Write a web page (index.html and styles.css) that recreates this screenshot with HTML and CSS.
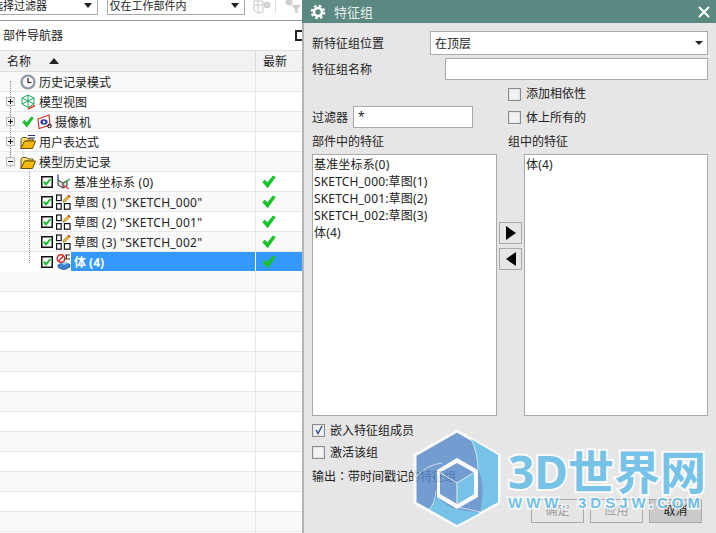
FILE: index.html
```html
<!DOCTYPE html>
<html lang="zh-CN">
<head>
  <meta charset="UTF-8" />
  <title>特征组</title>
  <link rel="stylesheet" href="styles.css">
</head>
<body>
  <svg class="defs" width="0" height="0">
    <symbol id="check" viewBox="0 0 12 12"><path d="M0.3 6.3 L2.4 4 L4.6 6.2 L9.4 0.4 L11.8 1.8 L4.9 11.4 Z" fill="#18c22c"/></symbol>
    <symbol id="tick-box" viewBox="0 0 12 12"><rect x="0.75" y="0.75" width="10.5" height="10.5" fill="#fff" stroke="#111" stroke-width="1.5"/><path d="M2 6.4 L3.4 5 L5 6.8 L8.8 2.4 L10.2 3.6 L5.1 10 Z" fill="#16c02a"/></symbol>
    <symbol id="sketch" viewBox="0 0 15 16"><g fill="#fff" stroke="#111" stroke-width="1.2"><rect x="0.6" y="1" width="4.6" height="5.6"/><rect x="0.6" y="9.6" width="4.6" height="5.6"/><rect x="8.4" y="9.6" width="5.6" height="5.6"/></g><path d="M7 8 L8 5.5 L12.6 1 L14.4 2.6 L9.6 7.2 Z" fill="#eebc3a" stroke="#8a6a10" stroke-width="0.6"/><path d="M12.6 1 L14.4 2.6 L13.6 3.4 L11.8 1.8 Z" fill="#d33"/></symbol>
    <symbol id="folder" viewBox="0 0 16 16"><path d="M1 14.5 V5 L2.5 3.5 H6.5 L8 5 H13 V7 H5 L1 14.5" fill="#fde27a" stroke="#6d5208"/><path d="M1 14.5 L4.5 7 H15.5 L12.5 14.5 Z" fill="#f4b90e" stroke="#6d5208"/></symbol>
  </svg>

  <section class="nav">
    <div class="toolbar">
      <div class="combo combo-type"><span>选择过滤器</span><i class="caret"></i></div>
      <div class="combo combo-scope"><span>仅在工作部件内</span><i class="caret"></i></div>
      <svg class="tool" width="18" height="14" viewBox="0 0 18 14"><g fill="none" stroke="#c9c9c9"><path d="M1 1 H10 V12 L5 13 L1 10 Z"/><path d="M1 5 H10 M5 1 V13"/><circle cx="14" cy="5" r="3" fill="#d8d8d8"/></g></svg>
      <i class="tool-sep"></i>
      <svg class="tool" width="18" height="14" viewBox="0 0 18 14"><circle cx="5" cy="2" r="3.5" fill="#d0d0d0"/><path d="M7 5 H17 L13.5 9 V13 H11 V9 Z" fill="#cfcfcf"/></svg>
    </div>
    <div class="nav-title">
      <span>部件导航器</span>
      <i class="maximize"></i>
    </div>
    <div class="table-head">
      <div class="cell-name"><span class="name">名称</span><i class="sort-up"></i></div>
      <div class="cell-new"><span class="name">最新</span></div>
    </div>
    <div class="tree">
      <i class="guide guide-root"></i>
      <i class="guide guide-history"></i>

      <div class="row">
        <div class="cell-name">
          <i class="exp exp-none"></i>
          <svg class="icon" width="16" height="16" viewBox="0 0 16 16"><circle cx="8" cy="8" r="7.6" fill="#8a94a4"/><circle cx="8" cy="8" r="5.4" fill="#f6f6f6"/><path d="M8 4 V8.5 H11.5" fill="none" stroke="#222" stroke-width="1.2"/></svg>
          <span class="name">历史记录模式</span>
        </div>
        <div class="cell-new"></div>
      </div>
      <div class="row">
        <div class="cell-name">
          <i class="exp exp-plus"></i>
          <svg class="icon" width="16" height="16" viewBox="0 0 16 16"><path d="M8 1 L14 4 V10 L8 13.5 L2 10 V4 Z M2 4 L14 10 M14 4 L2 10 M8 1 V13.5" fill="none" stroke="#1ca55c"/><path d="M8 15 L15 11.5" stroke="#e0452c" stroke-width="1.6"/></svg>
          <span class="name">模型视图</span>
        </div>
        <div class="cell-new"></div>
      </div>
      <div class="row">
        <div class="cell-name">
          <i class="exp exp-plus"></i>
          <svg class="check-mark" width="12" height="12"><use href="#check"/></svg>
          <svg class="icon" width="15" height="16" viewBox="0 0 15 16"><path d="M1 5 L12 1 L13 11 L2 14.5 Z" fill="#fff" stroke="#d2382a" stroke-width="1.2"/><ellipse cx="7" cy="8" rx="3.6" ry="2.8" fill="#2c3f9e"/><circle cx="7" cy="8" r="1.2" fill="#fff"/><circle cx="12.5" cy="12" r="1.8" fill="none" stroke="#111"/></svg>
          <span class="name">摄像机</span>
        </div>
        <div class="cell-new"></div>
      </div>
      <div class="row">
        <div class="cell-name">
          <i class="exp exp-plus"></i>
          <svg class="icon" width="16" height="16"><use href="#folder"/><path d="M8 1.5 H15 M8 4 H15" stroke="#2a2f80"/></svg>
          <span class="name">用户表达式</span>
        </div>
        <div class="cell-new"></div>
      </div>
      <div class="row">
        <div class="cell-name">
          <i class="exp"></i>
          <svg class="icon" width="16" height="16"><use href="#folder"/></svg>
          <span class="name">模型历史记录</span>
        </div>
        <div class="cell-new"></div>
      </div>
      <div class="row">
        <div class="cell-name level-2">
          <svg class="tick" width="12" height="12"><use href="#tick-box"/></svg>
          <svg class="icon" width="15" height="16" viewBox="0 0 15 16"><path d="M2 6 L7 9 V14 L2 11 Z M7 9 L11 7 V12 L7 14" fill="#ddd" stroke="#333"/><path d="M2 6 V0.5" stroke="#1a2fc0" stroke-width="1.2"/><path d="M7 9 L14 5" stroke="#2a9a40" stroke-width="1.2"/><path d="M7 11 L13 15" stroke="#d33" stroke-width="1.2"/></svg>
          <span class="name wide">基准坐标系 (0)</span>
        </div>
        <div class="cell-new"><svg class="late" width="14" height="14"><use href="#check"/></svg></div>
      </div>
      <div class="row">
        <div class="cell-name level-2">
          <svg class="tick" width="12" height="12"><use href="#tick-box"/></svg>
          <svg class="icon" width="15" height="16"><use href="#sketch"/></svg>
          <span class="name wide">草图 (1) "SKETCH_000"</span>
        </div>
        <div class="cell-new"><svg class="late" width="14" height="14"><use href="#check"/></svg></div>
      </div>
      <div class="row">
        <div class="cell-name level-2">
          <svg class="tick" width="12" height="12"><use href="#tick-box"/></svg>
          <svg class="icon" width="15" height="16"><use href="#sketch"/></svg>
          <span class="name wide">草图 (2) "SKETCH_001"</span>
        </div>
        <div class="cell-new"><svg class="late" width="14" height="14"><use href="#check"/></svg></div>
      </div>
      <div class="row">
        <div class="cell-name level-2">
          <svg class="tick" width="12" height="12"><use href="#tick-box"/></svg>
          <svg class="icon" width="15" height="16"><use href="#sketch"/></svg>
          <span class="name wide">草图 (3) "SKETCH_002"</span>
        </div>
        <div class="cell-new"><svg class="late" width="14" height="14"><use href="#check"/></svg></div>
      </div>
      <div class="row selected">
        <div class="cell-name level-2">
          <svg class="tick" width="12" height="12"><use href="#tick-box"/></svg>
          <svg class="icon" width="15" height="16" viewBox="0 0 15 16"><path d="M2 11 L8 8 L14 10.5 V13 L8 16 L2 13.5 Z" fill="#3d7fd0" stroke="#1d4f90" stroke-width="0.7"/><path d="M5 9 L8 7 L12 9 L8 11 Z" fill="#a8cdf2"/><circle cx="5" cy="4.5" r="3.8" fill="#fff" stroke="#d9261c" stroke-width="1.4"/><path d="M2.5 7 L7.5 2" stroke="#d9261c" stroke-width="1.4"/><path d="M9 1 H14 M9 5 H14 M10.5 1 V5" stroke="#222" stroke-width="0.9"/></svg>
          <span class="name">体 (4)</span>
        </div>
        <div class="cell-new"><svg class="late" width="14" height="14"><use href="#check"/></svg></div>
      </div>
      <div class="row"><div class="cell-name"></div><div class="cell-new"></div></div>
      <div class="row"><div class="cell-name"></div><div class="cell-new"></div></div>
      <div class="row"><div class="cell-name"></div><div class="cell-new"></div></div>
      <div class="row"><div class="cell-name"></div><div class="cell-new"></div></div>
      <div class="row"><div class="cell-name"></div><div class="cell-new"></div></div>
      <div class="row"><div class="cell-name"></div><div class="cell-new"></div></div>
      <div class="row"><div class="cell-name"></div><div class="cell-new"></div></div>
      <div class="row"><div class="cell-name"></div><div class="cell-new"></div></div>
      <div class="row"><div class="cell-name"></div><div class="cell-new"></div></div>
      <div class="row"><div class="cell-name"></div><div class="cell-new"></div></div>
      <div class="row"><div class="cell-name"></div><div class="cell-new"></div></div>
      <div class="row"><div class="cell-name"></div><div class="cell-new"></div></div>
      <div class="row"><div class="cell-name"></div><div class="cell-new"></div></div>
      <div class="row"><div class="cell-name"></div><div class="cell-new"></div></div>
    </div>
  </section>

  <section class="dialog">
    <header class="dialog-title">
      <svg width="16" height="16" viewBox="0 0 16 16"><circle cx="8" cy="8" r="4" fill="none" stroke="#fff" stroke-width="2.6"/><circle cx="8" cy="8" r="6.2" fill="none" stroke="#fff" stroke-width="2.2" stroke-dasharray="2.6 2.27"/></svg>
      <span>特征组</span>
      <svg class="close" width="12" height="12" viewBox="0 0 12 12"><path d="M1 1 L11 11 M11 1 L1 11" stroke="#fff" stroke-width="2"/></svg>
    </header>
    <div class="form">
      <div class="form-row row-position">
        <label>新特征组位置</label>
        <div class="select"><span>在顶层</span><i class="caret caret-small"></i></div>
      </div>
      <div class="form-row row-name">
        <label>特征组名称</label>
        <div class="input input-name"></div>
      </div>
      <div class="check-row row-depend"><i class="checkbox"></i><span>添加相依性</span></div>
      <div class="form-row row-filter">
        <label>过滤器</label>
        <div class="input input-filter">*</div>
        <div class="check-row"><i class="checkbox"></i><span>体上所有的</span></div>
      </div>
      <div class="list-heads">
        <span class="head-part">部件中的特征</span>
        <span>组中的特征</span>
      </div>
      <div class="lists">
        <ul class="list">
          <li>基准坐标系(0)</li>
          <li>SKETCH_000:草图(1)</li>
          <li>SKETCH_001:草图(2)</li>
          <li>SKETCH_002:草图(3)</li>
          <li>体(4)</li>
        </ul>
        <div class="movers">
          <button class="mover"><i class="arrow-right"></i></button>
          <button class="mover"><i class="arrow-left"></i></button>
        </div>
        <ul class="list">
          <li>体(4)</li>
        </ul>
      </div>
      <div class="check-row row-embed">
        <i class="checkbox checked"><svg width="10" height="10" viewBox="0 0 10 10"><path d="M2 5 L4 8.5 L8 1" fill="none" stroke="#3f4f8f" stroke-width="1.5"/></svg></i>
        <span>嵌入特征组成员</span>
      </div>
      <div class="check-row row-activate"><i class="checkbox"></i><span>激活该组</span></div>
      <p class="output">输出<span class="colon" lang="zh-TW">：</span>带时间戳记的特征组</p>
      <div class="actions">
        <button class="btn" disabled>确定</button>
        <button class="btn" disabled>应用</button>
        <button class="btn btn-cancel">取消</button>
      </div>
    </div>
  </section>

  <div class="watermark">
    <svg class="wm-logo" width="94" height="108" viewBox="0 0 94 108">
      <path d="M47 6 L89 30 V78 L47 101 L5 78 V30 Z" fill="#5a8dcc" stroke="#fff" stroke-width="3" stroke-linejoin="round"/>
      <path d="M61 14 L88 30 V77 L70 87 Q76 60 68 44 Q66 26 61 14 Z" fill="#5fbce8"/>
      <path d="M27 72 Q40 84 47 84 L70 88 L47 100 L19 84 Q24 78 27 72 Z" fill="#5fbce8"/>
      <path d="M6 52 Q16 40 32 38 M61 14 Q68 28 68 44 M70 87 Q58 84 47 82 M19 85 Q25 78 26 66" fill="none" stroke="#e4eef6" stroke-width="0.8"/>
      <path d="M47 33 L68 45 V72 L47 84 L27 72 V45 Z" fill="#fff"/>
      <path d="M47 38 L64 47.5 V69 L47 79 L30 69 V47.5 Z" fill="#5a8dcc"/>
      <path d="M47 58 L64 47.5 V69 L47 79 Z" fill="#5fbce8"/>
      <path d="M30 47.5 L47 58 L64 47.5 M47 58 V79" fill="none" stroke="#e8f0f6"/>
    </svg>
    <div class="wm-text">
      <div class="wm-name">3D世界网</div>
      <div class="wm-url">WWW. 3DSJW.COM</div>
    </div>
  </div>
</body>
</html>
```

FILE: styles.css
```css
:root {
  --panel: #e6e6e6;
  --teal: #5b8880;
  --line: #a9a9a9;
  --row-line: #e8e8e8;
  --select: #3399ff;
  --text: #222;
}

* {
  box-sizing: border-box;
}

html, body {
  height: 100%;
}

body {
  margin: 0;
  display: flex;
  overflow: hidden;
  position: relative;
  background: #fff;
  color: var(--text);
  font-family: "Noto Sans", "Noto Sans CJK SC", sans-serif;
  font-size: 12px;
  line-height: 16px;
}

.defs {
  position: absolute;
}

i {
  display: block;
  flex: none;
}

/* labels sit a pixel lower in their rows */
.name,
label,
.select span,
.check-row span {
  padding-top: 2px;
}

/* left side: part navigator */

.nav {
  width: 302px;
  flex: none;
}

.toolbar {
  display: flex;
  align-items: flex-start;
  height: 25px;
  margin-top: -4px;
  border-bottom: 1px solid #8d9a9c;
}

.combo {
  display: flex;
  align-items: center;
  justify-content: space-between;
  height: 19px;
  padding: 0 5px 0 4px;
  background: #fff;
  border: 1px solid var(--line);
  font-size: 11px;
}

.combo-type {
  width: 111px;
  margin-left: -13px;
}

.combo-scope {
  width: 139px;
  margin-left: 9px;
  padding-left: 2px;
}

.caret {
  width: 0;
  height: 0;
  border-left: 4px solid transparent;
  border-right: 4px solid transparent;
  border-top: 5px solid #222;
}

.caret-small {
  border-left-width: 4px;
  border-right-width: 4px;
  border-top-width: 4px;
}

.tool {
  margin: 4px 0 0 8px;
  flex: none;
}

.tool-sep {
  width: 1px;
  height: 17px;
  margin-left: 4px;
  background: #ddd;
}

.nav-title {
  display: flex;
  align-items: center;
  justify-content: space-between;
  height: 30px;
  padding: 0 0 0 3px;
  border-bottom: 1px solid #ddd;
}

.maximize {
  width: 7px;
  height: 11px;
  border: 2px solid #222;
  border-right: none;
}

.table-head {
  display: flex;
  height: 21px;
  background: #f2f2f2;
  border-bottom: 1px solid #ddd;
}

.table-head .cell-name {
  padding-left: 7px;
  gap: 18px;
  border-right: 1px solid #d8d8d8;
}

.table-head .cell-new {
  display: flex;
  align-items: center;
  padding-left: 7px;
}

.sort-up {
  width: 0;
  height: 0;
  border-left: 5px solid transparent;
  border-right: 5px solid transparent;
  border-bottom: 6px solid #222;
}

.tree {
  position: relative;
}

.guide {
  position: absolute;
  width: 1px;
  border-left: 1px dotted #8a8a8a;
}

.guide-root {
  left: 10px;
  top: 9px;
  height: 86px;
}

.guide-history {
  left: 29px;
  top: 100px;
  height: 91px;
}

.row {
  display: flex;
  height: 20px;
  border-bottom: 1px solid var(--row-line);
}

.row:nth-child(odd) {
  background: #f9f9f9;
}

.cell-name {
  display: flex;
  align-items: center;
  width: 256px;
  flex: none;
  padding-left: 6px;
  border-right: 1px solid var(--row-line);
}

.level-2 {
  padding-left: 41px;
}

.cell-new {
  flex: 1;
  display: flex;
  align-items: center;
  padding-left: 6px;
}

.wide {
  letter-spacing: 0.25px;
}

.exp {
  position: relative;
  width: 9px;
  height: 9px;
  margin-right: 5px;
  background: #f4f4f4;
  border: 1px solid #bbb;
}

.exp::before {
  content: "";
  position: absolute;
  left: 1px;
  top: 3px;
  width: 5px;
  height: 1px;
  background: #111;
}

.exp-plus::after {
  content: "";
  position: absolute;
  left: 3px;
  top: 1px;
  width: 1px;
  height: 5px;
  background: #111;
}

.exp-none {
  visibility: hidden;
}

.icon {
  flex: none;
  margin-right: 3px;
}

.check-mark {
  flex: none;
  margin: 0 3px 0 2px;
}

.tick {
  flex: none;
  margin-right: 3px;
}

.selected {
  border-bottom-color: #fff;
}

.selected .cell-name {
  border-right-color: #fff;
}

.selected .name {
  flex: 1;
  align-self: stretch;
  display: flex;
  align-items: center;
  margin-left: -3px;
  padding-left: 3px;
  background: var(--select);
  color: #fff;
  font-weight: 700;
}

.selected .cell-new {
  background: var(--select);
}

/* right side: feature group dialog */

.dialog {
  flex: 1;
  display: flex;
  flex-direction: column;
  background: var(--panel);
}

.dialog-title {
  display: flex;
  align-items: center;
  flex: none;
  height: 23px;
  padding: 0 6px 0 8px;
  background: var(--teal);
  color: #e6efed;
  font-size: 13px;
}

.dialog-title span {
  margin-left: 8px;
}

.close {
  margin-left: auto;
}

.form {
  flex: 1;
  padding: 8px 8px 0 8px;
  border-left: 2px solid #b4b4b4;
}

.form-row {
  display: flex;
  align-items: center;
}

.row-position {
  height: 24px;
  justify-content: space-between;
}

.select {
  display: flex;
  align-items: center;
  justify-content: space-between;
  width: 278px;
  height: 24px;
  padding: 0 4px;
  background: #fff;
  border: 1px solid var(--line);
}

.row-name {
  height: 22px;
  margin-top: 3px;
  justify-content: space-between;
}

.input {
  height: 22px;
  padding: 2px 4px;
  background: #fff;
  border: 1px solid var(--line);
}

.input-name {
  width: 263px;
}

.check-row {
  display: flex;
  align-items: center;
  gap: 5px;
  height: 14px;
}

.checkbox {
  display: flex;
  align-items: center;
  justify-content: center;
  width: 13px;
  height: 13px;
  background: #f2f2f2;
  border: 1px solid #8c8c8c;
  box-shadow: inset 0 0 0 1px #e2e2e2;
}

.row-depend {
  margin-top: 7px;
  padding-left: 196px;
}

.row-depend span {
  padding-top: 0;
}

.row-filter {
  height: 22px;
  margin-top: 5px;
}

.row-filter label {
  width: 41px;
}

.input-filter {
  width: 120px;
  margin-right: 35px;
}

.list-heads {
  display: flex;
  height: 20px;
  margin-top: 4px;
  align-items: center;
}

.head-part {
  width: 196px;
}

.lists {
  display: grid;
  grid-template-columns: 185px 27px 184px;
  height: 262px;
  margin-top: 2px;
}

.list {
  margin: 0;
  padding: 1px 1px;
  list-style: none;
  background: #fff;
  border: 1px solid var(--line);
  line-height: 17px;
  letter-spacing: 0.17px;
}

.movers {
  display: flex;
  flex-direction: column;
  align-items: center;
  gap: 4px;
  padding-top: 68px;
}

.mover {
  display: flex;
  align-items: center;
  justify-content: center;
  width: 23px;
  height: 22px;
  padding: 0;
  background: var(--panel);
  border: 1px solid var(--line);
}

.arrow-right {
  width: 0;
  height: 0;
  border-top: 7px solid transparent;
  border-bottom: 7px solid transparent;
  border-left: 10px solid #000;
}

.arrow-left {
  width: 0;
  height: 0;
  border-top: 7px solid transparent;
  border-bottom: 7px solid transparent;
  border-right: 10px solid #000;
}

.row-embed {
  margin-top: 7px;
}

.row-activate {
  margin-top: 8px;
}

.output {
  margin: 9px 0 0;
}

.colon {
  font-family: "Noto Sans CJK TC", sans-serif;
}

.actions {
  display: flex;
  justify-content: flex-end;
  gap: 6px;
  margin-top: 14px;
  padding-right: 6px;
}

.btn {
  width: 53px;
  height: 24px;
  padding: 0;
  background: var(--panel);
  border: 1px solid var(--line);
  color: #222;
  font: inherit;
}

.btn:disabled {
  color: #9e9e9e;
}

.btn-cancel {
  background: #cacaca;
}

/* watermark lies over everything */

.watermark {
  position: absolute;
  left: 410px;
  top: 425px;
  display: flex;
  opacity: 0.82;
}

.wm-text {
  margin: 19px 0 0 4px;
  color: #5fbce8;
  font-weight: 700;
  paint-order: stroke fill;
  -webkit-text-stroke: 4px #fff;
}

.wm-name {
  font-size: 46px;
  line-height: 54px;
  white-space: nowrap;
}

.wm-url {
  margin-top: -3px;
  font-family: "Liberation Sans", sans-serif;
  font-size: 15px;
  line-height: 16px;
  letter-spacing: 4px;
  white-space: nowrap;
  -webkit-text-stroke: 3px #fff;
}
```
